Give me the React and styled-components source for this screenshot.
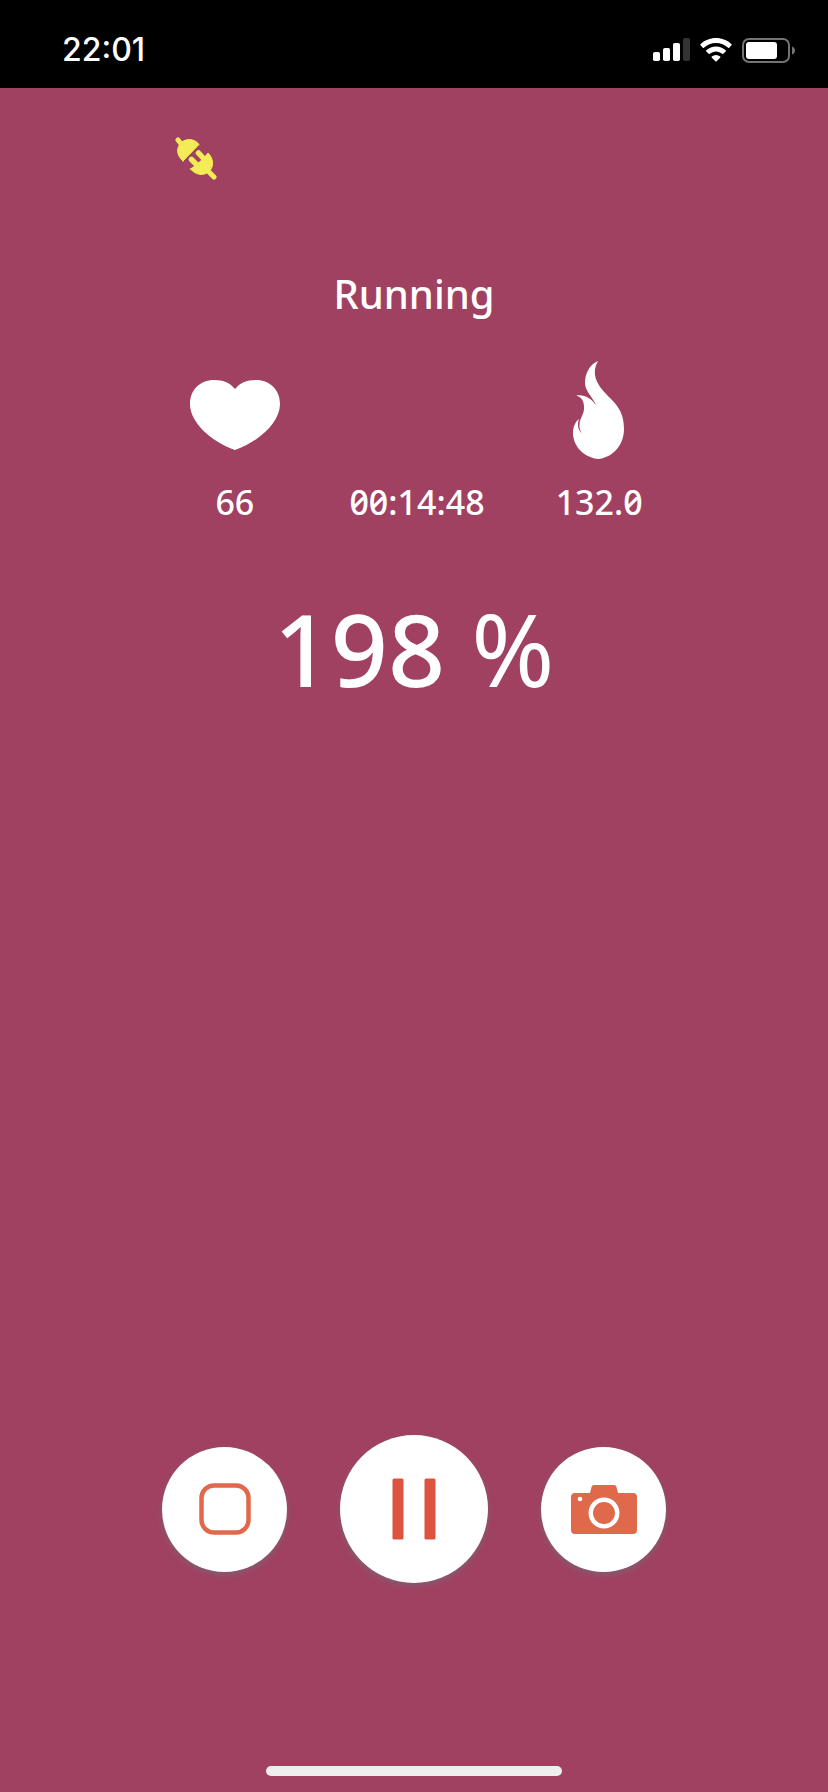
import React from "react";
import styled, { createGlobalStyle } from "styled-components";

const GlobalStyle = createGlobalStyle`
  * { box-sizing: border-box; }
  body { margin: 0; background: #a14161; }
`;

const Screen = styled.div`
  display: flex;
  flex-direction: column;
  min-height: 100vh;
  background: #a14161;
  color: #fff;
  font-family: "Noto Sans", "Open Sans", sans-serif;
  font-weight: 500;
`;

const StatusBar = styled.header`
  display: flex;
  align-items: center;
  justify-content: space-between;
  height: 88px;
  padding: 12px 33px 0 62px;
  background: #000;
`;

const Clock = styled.time`
  font: 500 32px/40px Inter, sans-serif;
`;

const StatusIcons = styled.div`
  display: flex;
  align-items: center;
  gap: 10px;
`;

const Main = styled.main`
  display: flex;
  flex: 1;
  flex-direction: column;
  align-items: center;
`;

const Connection = styled.div`
  width: 100%;
  height: 44px;
  margin-top: 48px;
  padding-left: 21%;
`;

const Activity = styled.h1`
  margin: 84px 0 0;
  font-size: 40px;
  font-weight: 500;
  line-height: 60px;
`;

const Stats = styled.section`
  display: grid;
  grid-template-columns: repeat(3, 1fr);
  align-items: end;
  width: 66%;
  margin: 36px 0 0 6px;
`;

const Stat = styled.div`
  display: flex;
  flex-direction: column;
  align-items: center;
`;

const StatIcon = styled.div`
  display: flex;
  align-items: center;
  height: 100px;
`;

const StatValue = styled.div`
  margin-top: 18px;
  font-size: 34px;
  line-height: 48px;
  font-feature-settings: "zero";
`;

const Percent = styled.div`
  margin-top: 54px;
  font-size: 100px;
  line-height: 136px;
`;

const Unit = styled.span`
  font-weight: 400;
`;

const Controls = styled.nav`
  display: flex;
  align-items: center;
  gap: 53px;
  margin-top: auto;
`;

const RoundButton = styled.button`
  display: flex;
  align-items: center;
  justify-content: center;
  width: ${(p) => p.$size}px;
  height: ${(p) => p.$size}px;
  padding: 0;
  border: 0;
  border-radius: 50%;
  background: #fff;
  color: ${(p) => p.$tone};
  box-shadow: 0 3px 6px rgba(110, 110, 120, 0.6);
  cursor: pointer;
`;

const HomeIndicator = styled.div`
  width: 296px;
  height: 10px;
  margin: 183px 0 16px;
  border-radius: 5px;
  background: #eee;
`;

const SignalIcon = () => (
  <svg width="37" height="24" viewBox="0 0 37 24" fill="#fff" aria-hidden="true">
    <rect x="0" y="14" width="7" height="9" rx="1.8" />
    <rect x="10" y="10" width="7" height="13" rx="1.8" />
    <rect x="20" y="5" width="7" height="18" rx="1.8" />
    <rect x="30" y="0" width="7" height="23" rx="1.8" fill="#333" />
  </svg>
);

const WifiIcon = () => (
  <svg width="32" height="24" viewBox="0 0 32 24" fill="#fff" aria-hidden="true">
    <path d="M16 0C22 0 27.500 2.300 31.500 6.200Q32 6.800 31.500 7.300L29.200 9.700Q28.700 10.200 28.100 9.700C24.800 6.600 20.600 4.900 16 4.900S7.200 6.600 3.900 9.700Q3.300 10.200 2.800 9.700L.5 7.300Q0 6.800.5 6.200C4.500 2.300 10 0 16 0Z" />
    <path d="M16 8.500C19.600 8.500 23 9.900 25.700 12.200Q26.300 12.800 25.700 13.400L23.300 15.800Q22.800 16.300 22.200 15.800C20.500 14.300 18.400 13.400 16 13.400S11.500 14.300 9.800 15.800Q9.200 16.300 8.700 15.800L6.300 13.400Q5.700 12.800 6.300 12.200C9 9.900 12.400 8.500 16 8.500Z" />
    <path d="M16 17Q18.500 17 20.200 18.500Q20.800 19.100 20.200 19.700L16.600 23.300Q16 23.900 15.400 23.300L11.800 19.700Q11.200 19.100 11.800 18.500Q13.500 17 16 17Z" />
  </svg>
);

const BatteryIcon = () => (
  <svg width="53" height="25" viewBox="0 0 53 25" aria-hidden="true">
    <rect x="1" y="1" width="46" height="23" rx="6" fill="none" stroke="#737373" strokeWidth="2" />
    <rect x="4" y="4" width="31" height="17" rx="3" fill="#fff" />
    <path d="M50 8.500Q53 9.500 53 12.500T50 16.500Z" fill="#737373" />
  </svg>
);

const PlugIcon = () => (
  <svg width="44" height="44" viewBox="0 0 44 44" role="img" aria-label="Connected" fill="#f3ec57" stroke="#f3ec57" strokeLinecap="round" strokeLinejoin="round">
    <path d="M4 4L8 9M35 36L40 41" strokeWidth="5" />
    <path d="M9 25L25 8.500C21 3 13 2 8 6C2 11 2 19 9 25Z" strokeWidth="1" />
    <path d="M16.500 33L21 30L30 22L34 17C40 23 40 31 35 35.500C30 40 22 39.500 16.500 33Z" strokeWidth="1" />
    <path d="M17.500 23.500L24 30M24.500 17L31 24" strokeWidth="5.500" />
  </svg>
);

const HeartIcon = () => (
  <svg width="90" height="80" viewBox="0 -10 90 80" fill="#fff" role="img" aria-label="Heart rate">
    <path d="M45 9C40 3 34 0 24 0C10 0 0 10 0 24C0 42 20 61 45 70C70 61 90 42 90 24C90 10 80 0 66 0C56 0 50 3 45 9Z" />
  </svg>
);

const FlameIcon = () => (
  <svg width="52" height="98" viewBox="0 0 52 98" fill="#fff" role="img" aria-label="Calories">
    <path d="M25 0C16 4 12 13 12 22C12 30 19 35 23 44C18 37 11 33 3 34.500C9 36 11.500 41 11 48C11 53 7 57 6.500 63C6 66 7 69 8.500 72.500C5 68 4 64 6 58C2 61 0 66 0 72C0 85 11 97 26 98C40 96 51 84 51 68C51 50 43 43 34 34C23 23 18 12 25 0Z" />
  </svg>
);

const StopIcon = () => (
  <svg width="52" height="52" viewBox="0 0 52 52" aria-hidden="true">
    <rect x="2.500" y="2.500" width="47" height="47" rx="12.500" fill="none" stroke="currentColor" strokeWidth="4.500" />
  </svg>
);

const PauseIcon = () => (
  <svg width="44" height="62" viewBox="0 0 44 62" fill="currentColor" aria-hidden="true">
    <rect x="0.500" y="0.500" width="11" height="61" rx="1.500" />
    <rect x="32.500" y="0.500" width="11" height="61" rx="1.500" />
  </svg>
);

const CameraIcon = () => (
  <svg width="66" height="50" viewBox="0 0 66 50" fill="currentColor" aria-hidden="true">
    <path d="M4 9H19L20.500 3Q21 1 23 1H43Q45 1 45.500 3L47 9H62Q66 9 66 13V46Q66 50 62 50H4Q0 50 0 46V13Q0 9 4 9Z" />
    <circle cx="33" cy="29" r="13.200" stroke="#fff" strokeWidth="4.500" />
    <circle cx="9" cy="15" r="2.300" fill="#fff" />
  </svg>
);

export default function App() {
  return (
    <Screen>
      <GlobalStyle />
      <StatusBar>
        <Clock>22:01</Clock>
        <StatusIcons>
          <SignalIcon />
          <WifiIcon />
          <BatteryIcon />
        </StatusIcons>
      </StatusBar>
      <Main>
        <Connection>
          <PlugIcon />
        </Connection>
        <Activity>Running</Activity>
        <Stats>
          <Stat>
            <StatIcon><HeartIcon /></StatIcon>
            <StatValue>66</StatValue>
          </Stat>
          <Stat>
            <StatValue>00:14:48</StatValue>
          </Stat>
          <Stat>
            <StatIcon><FlameIcon /></StatIcon>
            <StatValue>132.0</StatValue>
          </Stat>
        </Stats>
        <Percent>198 <Unit>%</Unit></Percent>
        <Controls aria-label="Workout controls">
          <RoundButton $size={125} $tone="#e0694c" aria-label="Stop"><StopIcon /></RoundButton>
          <RoundButton $size={148} $tone="#dc5340" aria-label="Pause"><PauseIcon /></RoundButton>
          <RoundButton $size={125} $tone="#e0694c" aria-label="Take photo"><CameraIcon /></RoundButton>
        </Controls>
        <HomeIndicator />
      </Main>
    </Screen>
  );
}
